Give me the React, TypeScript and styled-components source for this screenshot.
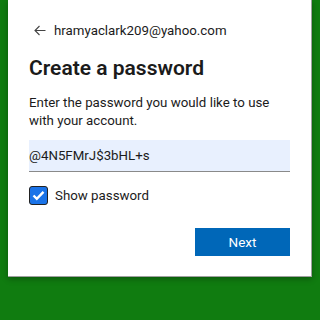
import React, { FC, useState } from 'react';
import styled, { createGlobalStyle } from 'styled-components';

const GlobalStyle = createGlobalStyle`
  html, body {
    margin: 0;
    padding: 0;
    background: #107c10;
    font-family: Roboto, 'Noto Sans', sans-serif;
    color: #1b1b1b;
  }
`;

const Page = styled.div`
  width: 320px;
  height: 320px;
  overflow: hidden;
`;

const Card = styled.div`
  margin: 0 8px;
  height: 277px;
  box-sizing: border-box;
  background: #fff;
  border-right: 1px solid #a0a0a0;
  border-bottom: 1px solid #a0a0a0;
  box-shadow: 0 2px 6px rgba(0, 0, 0, 0.3);
  padding: 20px 21px 0 21px;
  display: flex;
  flex-direction: column;
`;

const Identity = styled.div`
  display: flex;
  align-items: center;
  gap: 8px;
  height: 20px;
  padding-left: 5px;
  font-size: 13.3px;
`;

const BackButton = styled.button`
  border: 0;
  background: none;
  padding: 0;
  display: flex;
  color: #444;
`;

const Title = styled.h1`
  margin: 14px 0 0;
  font-size: 21px;
  line-height: 28px;
  font-weight: 600;
`;

const Description = styled.p`
  margin: 12px 0 0;
  font-size: 13.3px;
  line-height: 17.5px;
`;

const Input = styled.input`
  margin-top: 11px;
  height: 32px;
  box-sizing: border-box;
  width: 100%;
  border: 0;
  border-bottom: 1px solid #8a8a8a;
  background: #e8f0fe;
  padding: 0;
  font: inherit;
  font-size: 13.3px;
  color: #1b1b1b;
  outline: none;
`;

const CheckRow = styled.label`
  display: flex;
  align-items: center;
  gap: 7px;
  height: 19px;
  margin-top: 14px;
  font-size: 13.3px;
`;

const Box = styled.span<{ $checked: boolean }>`
  width: 19px;
  height: 19px;
  box-sizing: border-box;
  border: 1.5px solid #222;
  border-radius: 3px;
  background: ${(p) => (p.$checked ? '#1a73e8' : '#fff')};
  display: flex;
  align-items: center;
  justify-content: center;
`;

const Actions = styled.div`
  display: flex;
  justify-content: flex-end;
  margin-top: 23px;
`;

const NextButton = styled.button`
  width: 95px;
  height: 28px;
  border: 0;
  background: #0067b8;
  color: #fff;
  font: inherit;
  font-size: 13.5px;
`;

const App: FC = () => {
  const [show, setShow] = useState(true);
  return (
    <Page>
      <GlobalStyle />
      <Card>
        <Identity>
          <BackButton>
            <svg width="12" height="11" viewBox="0 0 12 11" fill="none" stroke="currentColor" strokeWidth="1.1">
              <path d="M11.5 5.5H1M5.5 1L1 5.5L5.5 10" />
            </svg>
          </BackButton>
          <span>hramyaclark209@yahoo.com</span>
        </Identity>
        <Title>Create a password</Title>
        <Description>Enter the password you would like to use with your account.</Description>
        <Input type={show ? 'text' : 'password'} defaultValue="@4N5FMrJ$3bHL+s" />
        <CheckRow onClick={() => setShow(!show)}>
          <Box $checked={show}>
            {show && (
              <svg width="13" height="11" viewBox="0 0 13 11" fill="none" stroke="#fff" strokeWidth="2.4">
                <path d="M1.5 5.5L4.8 8.8L11.5 1.8" />
              </svg>
            )}
          </Box>
          <span>Show password</span>
        </CheckRow>
        <Actions>
          <NextButton>Next</NextButton>
        </Actions>
      </Card>
    </Page>
  );
};

export default App;
